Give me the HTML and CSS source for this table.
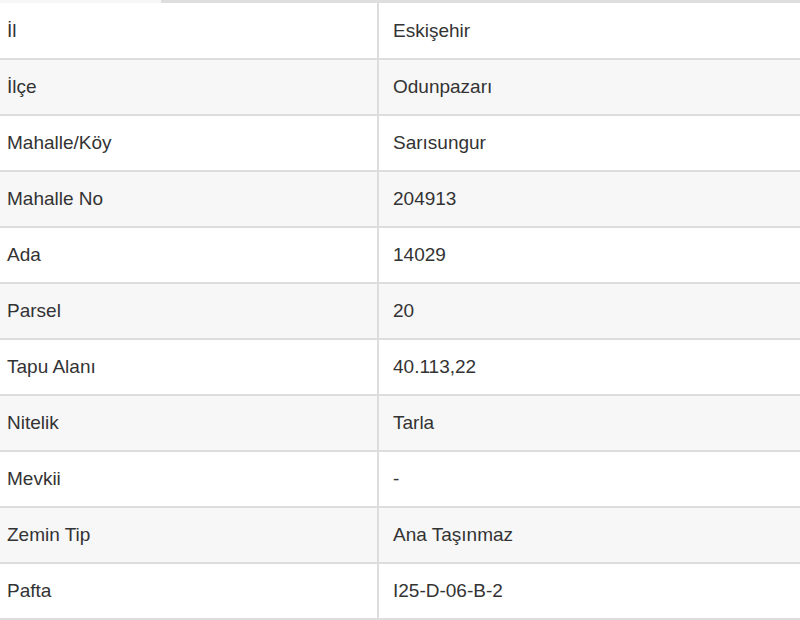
FILE: index.html
```html
<!DOCTYPE html>
<html lang="tr">
<head>
<meta charset="utf-8">
<link rel="stylesheet" href="styles.css">
</head>
<body>
<div class="topbar"><div class="tab"></div></div>
<table class="info">
<tbody>
<tr><td class="k">İl</td><td class="v">Eskişehir</td></tr>
<tr><td class="k">İlçe</td><td class="v">Odunpazarı</td></tr>
<tr><td class="k">Mahalle/Köy</td><td class="v">Sarısungur</td></tr>
<tr><td class="k">Mahalle No</td><td class="v">204913</td></tr>
<tr><td class="k">Ada</td><td class="v">14029</td></tr>
<tr><td class="k">Parsel</td><td class="v">20</td></tr>
<tr><td class="k">Tapu Alanı</td><td class="v">40.113,22</td></tr>
<tr><td class="k">Nitelik</td><td class="v">Tarla</td></tr>
<tr><td class="k">Mevkii</td><td class="v">-</td></tr>
<tr><td class="k">Zemin Tip</td><td class="v">Ana Taşınmaz</td></tr>
<tr><td class="k">Pafta</td><td class="v">I25-D-06-B-2</td></tr>
</tbody>
</table>
</body>
</html>
```
FILE: styles.css
```css
html, body {
  margin: 0;
  padding: 0;
  background: #ffffff;
}
body {
  width: 800px;
  height: 620px;
  overflow: hidden;
  font-family: "Liberation Sans", Arial, sans-serif;
  color: #333333;
}
.topbar {
  height: 3px;
  background: #dedede;
  display: flex;
}
.tab {
  width: 161px;
  background: #f7f7f7;
}
.info {
  width: 800px;
  border-collapse: collapse;
  table-layout: fixed;
}
.info tr {
  height: 56px;
  border-bottom: 2px solid #dddddd;
}
.info tr:nth-child(even) {
  background: #f7f7f7;
}
.info td {
  font-size: 19px;
  padding: 0;
  vertical-align: middle;
  line-height: 22px;
}
.info td.k {
  width: 370px;
  padding-left: 7px;
}
.info td.v {
  border-left: 2px solid #dddddd;
  padding-left: 14px;
}
```
